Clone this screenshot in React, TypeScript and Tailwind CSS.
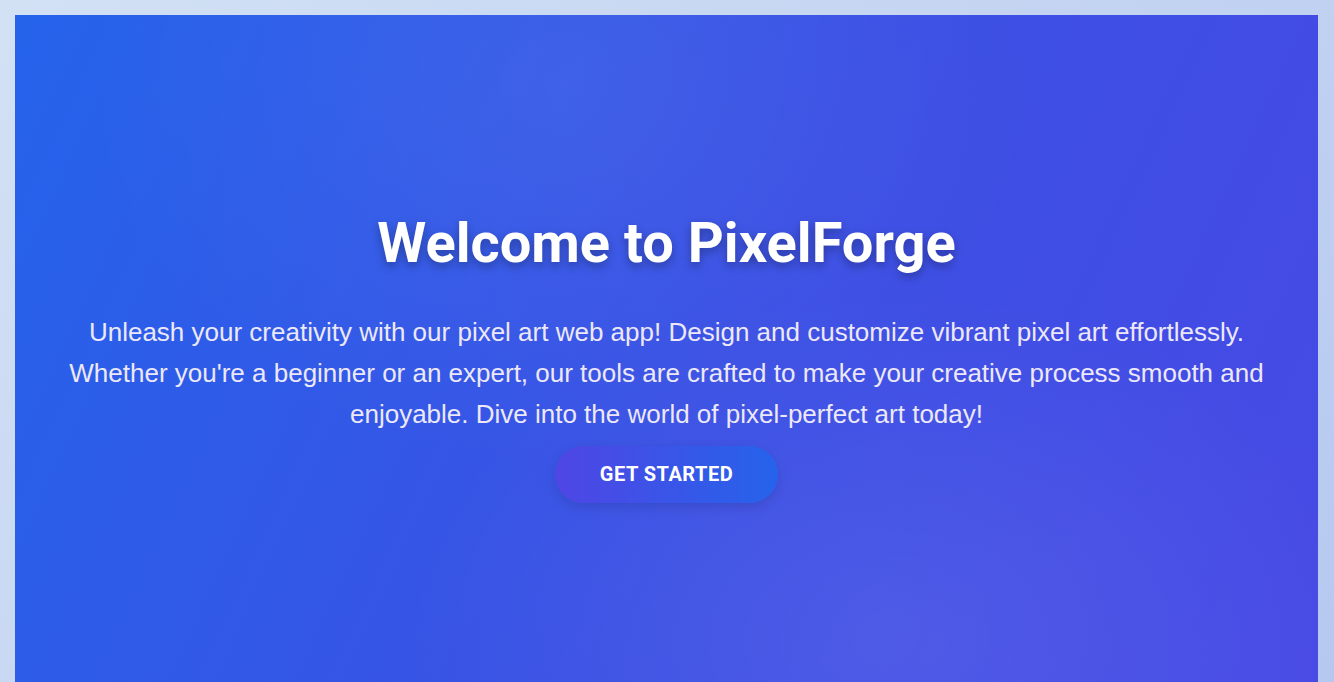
export default function App() {
  return (
    <div className="min-h-screen pt-[15px] pl-[15px] pr-[16px] bg-[linear-gradient(135deg,#d2e1f4,#b6c8f0)] overflow-hidden">
      <section className="h-screen w-full flex flex-col items-center justify-center text-center px-12 bg-[radial-gradient(ellipse_at_42%_10%,rgba(255,255,255,0.06),transparent_45%),radial-gradient(ellipse_at_68%_92%,rgba(255,255,255,0.08),transparent_40%),linear-gradient(115deg,#2563eb,#3b50e4_55%,#4749e5)]">
        <h1 className="font-['Roboto',sans-serif] font-bold text-white text-[56px] leading-[67px] mb-[35px] [text-shadow:0_4px_10px_rgba(0,0,0,0.3)]">
          Welcome to PixelForge
        </h1>
        <p className="font-['Liberation_Sans',Arial,sans-serif] text-[26px] leading-[41px] text-[#ece8f8] max-w-[1210px]">
          Unleash your creativity with our pixel art web app! Design and customize vibrant pixel art effortlessly. Whether you're a beginner or an expert, our tools are crafted to make your creative process smooth and enjoyable. Dive into the world of pixel-perfect art today!
        </p>
        <button className="mt-[11px] rounded-full px-[45px] py-[15px] font-['Roboto',sans-serif] font-bold text-[20px] tracking-[0.5px] leading-[27px] text-white uppercase bg-[linear-gradient(90deg,#4f46e5,#2563eb)] shadow-[0_4px_12px_rgba(0,0,0,0.12)]">
          Get Started
        </button>
      </section>
    </div>
  );
}
